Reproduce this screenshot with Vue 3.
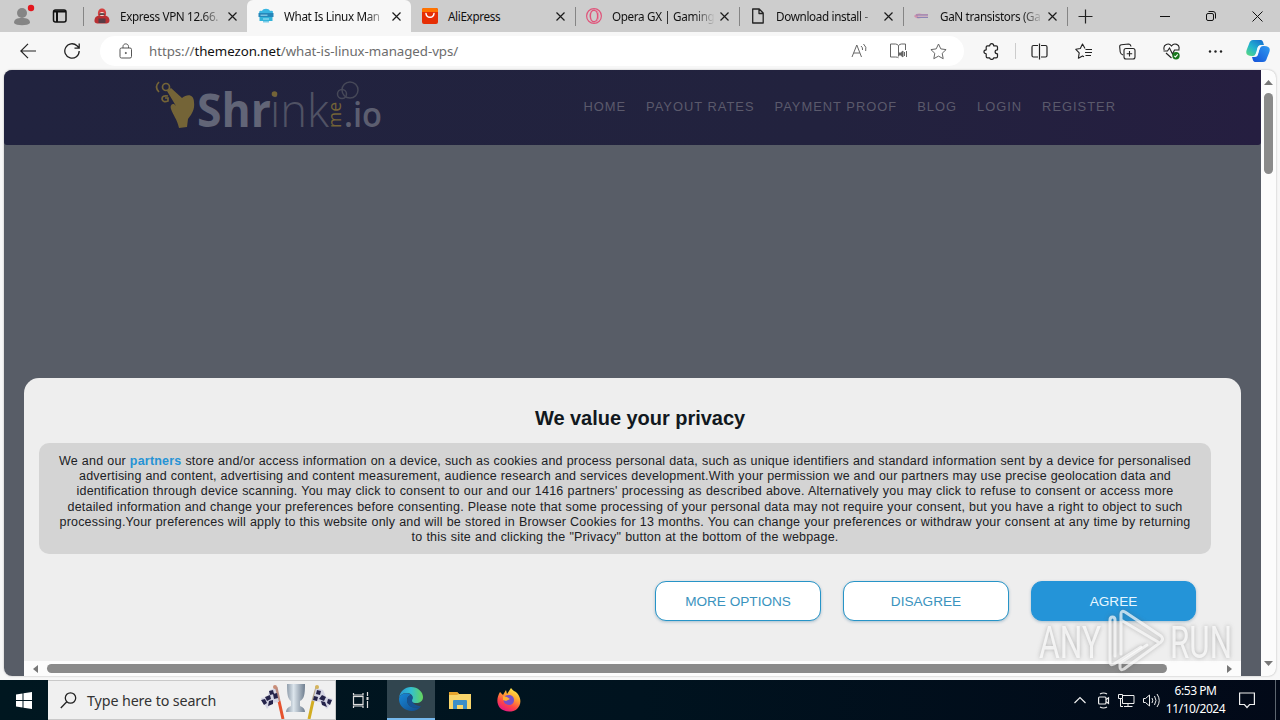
<template>
  <div class="screen">
    <header class="tabbar">
      <div class="tab-tools">
        <svg class="profile" width="22" height="24" viewBox="0 0 22 24">
          <circle cx="9" cy="9" r="5" fill="#858585" />
          <path d="M1 19c0-4 3-5 8-5s8 1 8 5c-2 3-14 3-16 0z" fill="#858585" />
          <circle cx="18" cy="4" r="3.2" fill="#e3171e" />
        </svg>
        <svg width="16" height="16" viewBox="0 0 16 16" fill="none" stroke="#111" stroke-width="1.5">
          <rect x="1.5" y="2" width="12.5" height="12" rx="2" />
          <path d="M2 3.6h12M5 4v10" stroke-width="2" />
        </svg>
      </div>
      <div v-for="tab in tabs" :key="tab.title" class="tab" :class="{ active: tab.active, after: tab.after }">
        <svg class="favicon" width="16" height="16" viewBox="0 0 16 16">
          <g v-if="tab.icon === 'agent'">
            <path d="M4 7C3.500 3 5 .5 8 .5s4.500 2.500 4 6.500l-2 3H6z" fill="#d3403f" />
            <path d="M.5 12C1 8 4 7.500 8 7.500s7 .5 7.500 4.500c0 4-3 3.500-7.500 3.500S0 16 .5 12z" fill="#b92f32" />
            <path d="M5.600 5.500C6 3.500 10 3.500 10.400 5.500L9.500 8h-3z" fill="#f4d6ce" />
            <path d="M5.400 5.300h5.200v1.500H5.400z" fill="#33272b" />
            <rect x="4.500" y="10.500" width="7" height="4.500" fill="#593c45" />
          </g>
          <g v-else-if="tab.icon === 'cloud'">
            <path d="M2 6c-2-2 0-4 2-3 1-3 7-3 8 0 3-1 4 1 2 3z" fill="#38b6e2" />
            <path d="M.5 5h15v4H.5z" fill="#2587ba" />
            <path d="M1.500 9h13v4h-13z" fill="#32b3d9" />
            <path d="M2.500 7.200h7M5 11h6" stroke="#c5f4ff" stroke-width=".8" />
            <path d="M5 13h6v1.500H5z" fill="#79cbe8" />
          </g>
          <g v-else-if="tab.icon === 'ali'">
            <rect width="16" height="16" rx="2" fill="#e62e04" />
            <path d="M0 4V2q0-2 2-2h12q2 0 2 2v2z" fill="#ff7300" />
            <path d="M4 5.500c.5 5 7.500 5 8 0" fill="none" stroke="#fff" stroke-width="1.500" stroke-linecap="round" />
          </g>
          <g v-else-if="tab.icon === 'opera'" fill="none" stroke="#df557b">
            <circle cx="8" cy="8" r="7.400" stroke-width="1.200" />
            <ellipse cx="8" cy="8" rx="3.700" ry="5.800" stroke-width="1.500" />
            <path d="M9 1.600c5 1.500 5 11 0 12.800" stroke="#e88da8" />
          </g>
          <path v-else-if="tab.icon === 'page'" d="M2.700 1h6.500l4 4v10H2.700zM9 1v4.500h4.500" fill="none" stroke="#222" stroke-width="1.300" stroke-linejoin="round" />
          <g v-else>
            <path d="M0 8c2-3 6-3 8-2h6v1.500H4v1h10V10H7c-3 1-6 0-7-2z" fill="#cf91ad" />
            <path d="M2 7h12M3 9.500h11" stroke="#8b86b5" />
          </g>
        </svg>
        <span class="tab-title" :class="{ fade: tab.fade }">{{ tab.title }}</span>
        <svg class="close" width="9" height="9" viewBox="0 0 9 9" stroke="#1b1b1b" stroke-width="1.200">
          <path d="M.5.5l8 8M8.500.5l-8 8" />
        </svg>
      </div>
      <div class="new-tab">
        <svg width="15" height="15" viewBox="0 0 15 15" stroke="#222" stroke-width="1.200"><path d="M7.500.5v14M.5 7.500h14" /></svg>
      </div>
      <div class="window-buttons">
        <svg width="10" height="10" viewBox="0 0 10 10" stroke="#111"><path d="M0 5.500h10" /></svg>
        <svg width="10" height="10" viewBox="0 0 10 10" fill="none" stroke="#111">
          <rect x=".5" y="2.500" width="7" height="7" rx="1.500" />
          <path d="M2.500.5H7q2.500 0 2.500 2.500v4.500" />
        </svg>
        <svg width="11" height="11" viewBox="0 0 11 11" stroke="#111"><path d="M.5.5l10 10M10.500.5l-10 10" /></svg>
      </div>
    </header>

    <div class="toolbar">
      <svg class="back" width="16" height="16" viewBox="0 0 16 16" fill="none" stroke="#222" stroke-width="1.200"><path d="M16 8H.8M8 .8L.8 8 8 15.200" /></svg>
      <svg class="reload" width="16" height="16" viewBox="0 0 16 16" fill="none" stroke="#222" stroke-width="1.300"><path d="M15.200 8A7.200 7.200 0 1 1 13 2.800l2 2M15.200.5v4.600h-4.700" /></svg>
      <div class="address">
        <svg width="14" height="16" viewBox="0 0 14 16" fill="none" stroke="#555">
          <rect x="1" y="5" width="11.500" height="10" rx="1.500" />
          <path d="M4 5V3.500c0-3.500 5.500-3.500 5.500 0V5" />
          <circle cx="6.800" cy="10" r=".6" fill="#555" />
        </svg>
        <span class="url">https://<b>themezon.net</b>/what-is-linux-managed-vps/</span>
        <div class="address-icons">
          <svg width="17" height="16" viewBox="0 0 17 16" fill="none" stroke="#666"><path d="M1 14L5.800 2 10.500 14M2.800 10h6M10 3q2 1.500 1.500 4M12.500 1q3.500 3 2.200 7" /></svg>
          <svg width="18" height="16" viewBox="0 0 18 16" fill="none" stroke="#666">
            <path d="M8.500 2.500v11M8.500 2.500Q7 1 5.500 1h-5v13h5q2 0 3 .8M8.500 2.500Q10 1 11.500 1h4v6" />
            <path d="M9 10h1.500L13 8v6l-2.500-2H9z" fill="#666" />
            <path d="M14.500 9v4M16.500 8v6" />
          </svg>
          <svg width="17" height="17" viewBox="0 0 17 17" fill="none" stroke="#666" stroke-linejoin="round"><path d="M8.500 1l2.300 4.900 5.300.7-3.900 3.700 1 5.400-4.700-2.600-4.700 2.600 1-5.400L.9 6.600l5.300-.7z" /></svg>
        </div>
      </div>
      <div class="actions">
        <svg width="17" height="17" viewBox="0 0 17 17" fill="none" stroke="#222" stroke-width="1.200" stroke-linejoin="round"><path d="M4.500 2.800h2.200c0-2.800 4-2.800 4 0h2.500q1.300 0 1.300 1.300v2.700c-3.200 0-3.200 4 0 4v2.700q0 1.300-1.300 1.300h-2.500c0 2.200-4 2.200-4 0H4.500q-1.300 0-1.300-1.300v-2.700c-3-.2-3-3.800 0-4V4.100q0-1.300 1.300-1.300z" /></svg>
        <i></i>
        <svg width="17" height="17" viewBox="0 0 17 17" fill="none" stroke="#222" stroke-width="1.200"><path d="M7 2.500H2.500Q1 2.500 1 4v8.500Q1 14 2.500 14H7M10 2.500h4.500Q16 2.500 16 4v8.500q0 1.500-1.500 1.500H10M8.500.5v16" /></svg>
        <svg width="17" height="17" viewBox="0 0 17 17" fill="none" stroke="#222" stroke-width="1.100" stroke-linejoin="round"><path d="M10 5.500L7.500 1 5.300 5.500.8 6.300l3.400 3.500-.8 5.400 4.100-2.300 1.500.8M10.500 6.500H17M10 9.500h7M10.500 12.500H16" /></svg>
        <svg width="17" height="17" viewBox="0 0 17 17" fill="none" stroke="#222" stroke-width="1.100">
          <rect x="5" y="5.500" width="11" height="10.500" rx="2" />
          <path d="M4 12Q1.500 11 1.200 9L.7 4Q.5 2 2.500 1.800L9.500 1q2 0 2.500 2.500M10.500 8v5.500M7.700 10.700h5.500" />
        </svg>
        <svg width="17" height="17" viewBox="0 0 17 17" fill="none" stroke="#222" stroke-width="1.100">
          <path d="M1.200 7C-.5 1 6-.5 8.500 3 11-.5 17.500 1 15.800 6.500M3 10l5.500 5M.5 8h4l2-3 3 6 2-4h5" />
          <circle cx="13" cy="12.800" r="3.700" fill="#18771d" stroke="none" />
          <path d="M11.300 12.800l1.200 1.200 2.200-2.700" stroke="#fff" />
        </svg>
        <svg width="17" height="17" viewBox="0 0 17 17" fill="#222"><circle cx="3" cy="8.500" r="1.200" /><circle cx="8.500" cy="8.500" r="1.200" /><circle cx="14" cy="8.500" r="1.200" /></svg>
      </div>
      <svg class="copilot" width="24" height="23" viewBox="0 0 24 23">
        <defs>
          <linearGradient id="cpa" x1="0" y1="1" x2=".8" y2="0"><stop stop-color="#5ddc78" /><stop offset=".5" stop-color="#22b4cf" /><stop offset="1" stop-color="#1673cf" /></linearGradient>
          <linearGradient id="cpb" x1="0" y1="1" x2="1" y2="0"><stop stop-color="#1450d8" /><stop offset="1" stop-color="#2e9bf0" /></linearGradient>
        </defs>
        <path d="M7 0h7c3 0 3 2 4 5h-3c-3 0-3 3-4 6-1 4-2 5-5 5-5 0-7-2-5-7l2-5C4 1 5 0 7 0z" fill="url(#cpa)" />
        <path d="M17 22h-7c-3 0-3-2-4-5h3c3 0 3-3 4-6 1-4 2-5 5-5 5 0 7 2 5 7l-2 5c-1 3-2 4-4 4z" fill="url(#cpb)" />
        <path d="M11.500 7.500q.8-2 3-2h.8q-1.300 1.500-2.200 4.500l-1.300 4q-.7 2-2.800 2h-.5q1.300-2 2-4.500z" fill="#f4faff" />
      </svg>
    </div>

    <main class="viewport">
      <div class="page">
        <div class="site-header">
          <svg class="logo" width="230" height="64" viewBox="0 0 230 64">
            <g fill="#746437">
              <path d="M17 8l11 10c6-5 12-3 12 4 1 7-2 12-6 17l-1 8-8 1c-2-9-6-13-8-19-1-3 0-5 3-5l2 2-9-15z" />
            </g>
            <g fill="none" stroke="#746437" stroke-width="1.700">
              <circle cx="12" cy="7" r="3.500" />
              <path d="M5 2Q0 7 5 12M14 16q-6-1-6 3 1 4 6 2v-3h-3" />
            </g>
            <text x="43" y="47" textLength="74" lengthAdjust="spacingAndGlyphs" class="logo-bold">Shr</text>
            <text x="116" y="47" textLength="59" lengthAdjust="spacingAndGlyphs" class="logo-light">ink</text>
            <circle cx="120.500" cy="14" r="2.800" fill="#746437" />
            <text transform="translate(187 48) rotate(-90)" textLength="26" lengthAdjust="spacingAndGlyphs" class="logo-me">me</text>
            <text x="190" y="47" textLength="38" lengthAdjust="spacingAndGlyphs" class="logo-io">.io</text>
            <g fill="none" stroke="#464858" stroke-width="1.500"><circle cx="196" cy="10" r="8" /><circle cx="188" cy="14" r="4.500" /></g>
          </svg>
          <nav>
            <a v-for="link in links" :key="link">{{ link }}</a>
          </nav>
        </div>
        <section class="consent">
          <h2>We value your privacy</h2>
          <div class="notice">
            <div v-for="(line, i) in lines" :key="i" class="line" :style="{ width: line.width + 'px' }">
              <template v-if="i === 0">We and our <b>partners</b>{{ ' ' }}</template>{{ line.text }}
            </div>
          </div>
          <div class="buttons">
            <button>MORE OPTIONS</button>
            <button>DISAGREE</button>
            <button class="primary">AGREE</button>
          </div>
          <div class="hscroll">
            <svg width="5" height="8" viewBox="0 0 5 8"><path d="M5 0v8L0 4z" fill="#777" /></svg>
            <div class="hthumb"></div>
            <svg width="5" height="8" viewBox="0 0 5 8"><path d="M0 0v8l5-4z" fill="#777" /></svg>
          </div>
        </section>
      </div>
      <div class="vscroll">
        <svg width="9" height="5" viewBox="0 0 9 5"><path d="M0 5h9L4.500 0z" fill="#777" /></svg>
        <div class="vthumb"></div>
        <svg class="down" width="9" height="5" viewBox="0 0 9 5"><path d="M0 0h9L4.500 5z" fill="#777" /></svg>
      </div>
    </main>

    <footer class="taskbar">
      <div class="start">
        <svg width="16" height="17" viewBox="0 0 16 17" fill="#fff"><path d="M0 2.500L6.500 1.500V8H0zM7.500 1.300L16 0v8H7.500zM0 9h6.500v6.500L0 14.500zM7.500 9H16v8l-8.500-1.300z" /></svg>
      </div>
      <div class="search">
        <svg width="17" height="17" viewBox="0 0 17 17" fill="none" stroke="#222" stroke-width="1.300"><circle cx="10.500" cy="6" r="5.200" /><path d="M6.800 9.800L.8 16" /></svg>
        <span>Type here to search</span>
        <svg class="race" width="75" height="38" viewBox="0 0 75 38">
          <defs><linearGradient id="cup"><stop stop-color="#8593a2" /><stop offset=".4" stop-color="#dce5ec" /><stop offset="1" stop-color="#6f7e8f" /></linearGradient></defs>
          <path d="M27 3h18c0 11-1 15-5 17v5c3 1 5 3 5 6H26c0-3 2-5 5-6v-5c-3-2-4-6-4-17z" fill="url(#cup)" />
          <path d="M16 6l3 14" stroke="#b98a80" stroke-width="3" />
          <path d="M19 20l4 18" stroke="#e6522d" stroke-width="3" />
          <path d="M57 6l-4 14" stroke="#b5a588" stroke-width="3" />
          <path d="M53 20l-4 18" stroke="#d2ad22" stroke-width="3" />
          <path d="M15 7l4 14-7 1-5 6-6-11 6-1 3-7z" fill="#d5d5e4" />
          <path d="M9 10l4-1 1 4-4 1zM5 16l5-2 1 4-4 2zM13 13l4-1 1 5-4 1zM9 20l4-1v4l-5 2zM1 19l4-1 2 4-3 2z" fill="#25234a" />
          <path d="M56 7l-3 13 7 1 7 7 6-10-7-2-3-7z" fill="#d5d5e4" />
          <path d="M57 9l4 1-1 4-4-1zM62 14l4 2-2 4-5-2zM54 15l4 1-1 4-4-1zM61 20l4 1 2 5-5-2zM68 18l4 1-2 5-3-2z" fill="#25234a" />
          <circle cx="15" cy="6" r="2" fill="#c98d76" />
          <circle cx="57" cy="6" r="2" fill="#d5b45c" />
        </svg>
      </div>
      <div class="task">
        <svg width="18" height="17" viewBox="0 0 18 17" fill="none" stroke="#ddd" stroke-width="1.200"><rect x="1.500" y="4.500" width="9.500" height="8" /><path d="M1.500 1v2H11V1M1.500 16v-2H11v2M15.500 0v4M15.500 9v7" /><path d="M14.500 5h2v3h-2z" fill="#ddd" stroke="none" /></svg>
      </div>
      <div class="task current">
        <svg width="24" height="24" viewBox="0 0 24 24">
          <defs>
            <linearGradient id="edgea"><stop stop-color="#2796d4" /><stop offset=".5" stop-color="#33bfd1" /><stop offset="1" stop-color="#65d65b" /></linearGradient>
            <linearGradient id="edgeb" x1="0" y1="0" x2="1" y2="1"><stop stop-color="#1789d9" /><stop offset="1" stop-color="#124989" /></linearGradient>
          </defs>
          <path d="M0 11C1 4 6 0 12 0c7 0 12 5 12 10 0 4-3 6-7 6-3 0-5-1-4-3 2-4-1-7-5-7-4 0-7 2-8 5z" fill="url(#edgea)" />
          <path d="M0 12c0-5 8-8 12-4-4 1-5 5-3 9 3 5 10 4 13 2-3 5-9 6-14 4-5-2-8-6-8-11z" fill="url(#edgeb)" />
          <path d="M12 8c-4 1-5 5-3 9 3 5 10 4 13 2-4 0-9-2-9-6 1-2 1-4-1-5z" fill="#155293" />
        </svg>
      </div>
      <div class="task">
        <svg width="22" height="19" viewBox="0 0 22 19"><path d="M0 1h8l2 2h12v15H0z" fill="#f8d56b" /><path d="M0 1h8l2 2-2 1H0z" fill="#e6a42c" /><path d="M4 10q0-1 1-1h12q1 0 1 1v8h-4v-4H8v4H4z" fill="#3c8ec8" /></svg>
      </div>
      <div class="task">
        <svg width="24" height="24" viewBox="0 0 24 24">
          <defs><linearGradient id="fox" x1=".8" y1="0" x2=".3" y2="1"><stop stop-color="#fff34f" /><stop offset=".35" stop-color="#ffab31" /><stop offset=".7" stop-color="#ff4546" /><stop offset="1" stop-color="#e51486" /></linearGradient></defs>
          <path d="M3 4l3 3 3-5 1 4 4-6c2 3 4 3 6 5 5 6 4 12 0 16-5 4-13 3-17-1C-1 15 0 9 3 4z" fill="url(#fox)" />
          <path d="M8 8c4-2 9-1 9 4s-5 6-8 4c-2-1-3-3-2-4h5L8 10z" fill="#7650ca" />
          <path d="M6 8l4 1 3 2-4 2-3-1z" fill="#ffad32" />
        </svg>
      </div>
      <div class="tray">
        <svg class="chevron" width="12" height="8" viewBox="0 0 12 8" fill="none" stroke="#eee" stroke-width="1.200"><path d="M.5 7L6 1.500 11.500 7" /></svg>
        <svg width="12" height="17" viewBox="0 0 12 17" fill="none" stroke="#eee" stroke-width="1.200"><rect x=".6" y="5" width="7.400" height="7" rx="1" /><path d="M8 7.500l2.500-1.700v5.500L8 9.700M2 2q3.500-2 7 0M2 15q3.500 2 7 0" /></svg>
        <svg width="17" height="15" viewBox="0 0 17 15" fill="none" stroke="#eee"><path d="M5 2.500h11v8H4.500V6M10 10.500v3M6 13.500h8.500M.5 1.500h4v4h-4zM2.500 5.500v8H5" /></svg>
        <svg width="17" height="15" viewBox="0 0 17 15" fill="none" stroke="#eee"><path d="M.5 5.500h2L6.500 2v11L2.500 9.500h-2zM9 5q1.500 2.500 0 5M11.500 3q3 4.500 0 9M14 1q4.500 6.500 0 13" /></svg>
      </div>
      <div class="clock"><span>6:53 PM</span><span>11/10/2024</span></div>
      <svg class="bell" width="16" height="17" viewBox="0 0 16 17" fill="none" stroke="#eee" stroke-width="1.200"><path d="M.6 1h14.800v11.500h-4.800L8 15.500l-2.600-3H.6z" /></svg>
      <i class="peek"></i>
    </footer>

    <svg class="watermark" width="204" height="68" viewBox="0 0 204 68">
      <g class="mark-text">
        <text x="5" y="51" textLength="62" lengthAdjust="spacingAndGlyphs">ANY</text>
        <text x="136" y="51" textLength="62" lengthAdjust="spacingAndGlyphs">RUN</text>
      </g>
      <g class="mark-shape" fill="none" stroke-linejoin="round" stroke-linecap="round">
        <path d="M81 49V13q0-3-2.500-3T76 13v42q0 4 4 2l27-17" />
        <path d="M87 47V7q0-4 4-2l36 24q3 3 0 6L90 62q-4 2-4-2v-4l27-18M87 13l37 22" />
      </g>
    </svg>
  </div>
</template>

<script setup>
const tabs = [
  { title: 'Express VPN 12.66.', icon: 'agent', fade: true },
  { title: 'What Is Linux Man', icon: 'cloud', active: true, fade: true },
  { title: 'AliExpress', icon: 'ali', after: true },
  { title: 'Opera GX | Gaming', icon: 'opera', fade: true },
  { title: 'Download install -', icon: 'page', fade: true },
  { title: 'GaN transistors (Ga', icon: 'gan', fade: true }
]

const links = ['HOME', 'PAYOUT RATES', 'PAYMENT PROOF', 'BLOG', 'LOGIN', 'REGISTER']

const lines = [
  { width: 1132, text: 'store and/or access information on a device, such as cookies and process personal data, such as unique identifiers and standard information sent by a device for personalised' },
  { width: 1092, text: 'advertising and content, advertising and content measurement, audience research and services development.With your permission we and our partners may use precise geolocation data and' },
  { width: 1097, text: 'identification through device scanning. You may click to consent to our and our 1416 partners\' processing as described above. Alternatively you may click to refuse to consent or access more' },
  { width: 1115, text: 'detailed information and change your preferences before consenting. Please note that some processing of your personal data may not require your consent, but you have a right to object to such' },
  { width: 1131, text: 'processing.Your preferences will apply to this website only and will be stored in Browser Cookies for 13 months. You can change your preferences or withdraw your consent at any time by returning' },
  { width: 427, text: 'to this site and clicking the "Privacy" button at the bottom of the webpage.' }
]
</script>

<style>
body {
  overflow: hidden;
}
</style>

<style scoped>
.screen {
  position: relative;
  width: 1280px;
  height: 720px;
  display: flex;
  flex-direction: column;
  background: #f7f7f7;
  font-family: "Noto Sans", "Open Sans", sans-serif;
  font-size: 12px;
  overflow: hidden;
}

.screen * {
  box-sizing: border-box;
}

svg {
  display: block;
  flex: none;
}

/* tabs */
.tabbar {
  height: 32px;
  flex: none;
  display: flex;
  background: #cdcdcd;
}

.tab-tools {
  width: 83px;
  display: flex;
  align-items: center;
  gap: 17px;
  padding-left: 13px;
}

.tab {
  width: 164px;
  display: flex;
  align-items: center;
  padding-left: 11px;
  position: relative;
}

.tab::before,
.new-tab::before {
  content: '';
  position: absolute;
  left: 0;
  top: 7px;
  height: 19px;
  width: 1px;
  background: #858585;
}

.tab.active {
  background: #f7f7f7;
  border-radius: 6px 6px 0 0;
}

.tab.active::before,
.tab.after::before {
  display: none;
}

.tab-title {
  width: 102px;
  margin-left: 10px;
  white-space: nowrap;
  color: #111;
  font-size: 11.7px;
  letter-spacing: -0.35px;
  line-height: 18px;
}

.tab-title.fade {
  mask-image: linear-gradient(to right, #000 80%, transparent 101%);
}

.close {
  margin-left: 6px;
}

.new-tab {
  position: relative;
  width: 40px;
  display: flex;
  align-items: center;
  padding-left: 11px;
}

.window-buttons {
  flex: 1;
  display: flex;
  align-items: center;
  justify-content: flex-end;
  gap: 36px;
  padding-right: 17px;
}

/* toolbar */
.toolbar {
  height: 38px;
  flex: none;
  display: flex;
  align-items: center;
  padding-left: 20px;
}

.reload {
  margin-left: 28px;
}

.address {
  width: 864px;
  height: 30px;
  margin-left: 20px;
  border-radius: 15px;
  background: #fff;
  display: flex;
  align-items: center;
  padding: 0 17px 0 19px;
}

.url {
  margin-left: 16px;
  font-size: 13.3px;
  letter-spacing: -0.05px;
  color: #6c6c6c;
}

.url b {
  color: #111;
  font-weight: 400;
}

.address-icons {
  display: flex;
  align-items: center;
  gap: 22px;
  margin-left: auto;
}

.actions {
  display: flex;
  align-items: center;
  gap: 27px;
  margin-left: 19px;
}

.actions i {
  width: 1px;
  height: 16px;
  background: #ccc;
  margin: 0 -12px 0 -12px;
}

.copilot {
  margin-left: 22px;
}

/* page */
.viewport {
  width: 1272px;
  height: 606px;
  flex: none;
  margin-left: 4px;
  display: flex;
  border-radius: 8px;
  overflow: hidden;
  background: #fcfcfc;
  box-shadow: 0 0 2px #aaa;
}

.page {
  width: 1257px;
  background: #585d67;
  display: flex;
  flex-direction: column;
}

.site-header {
  height: 75px;
  display: flex;
  padding: 10px 145px 0 150px;
  justify-content: space-between;
  background: linear-gradient(to right, #21233f, #22223e 65%, #251e40);
  border-radius: 0 0 3px 3px;
}

.logo-bold {
  font: 700 46px "Open Sans", sans-serif;
  fill: #626577;
}

.logo-light {
  font: 300 46px "Open Sans", sans-serif;
  fill: #505264;
}

.logo-me {
  font: 400 19px "Open Sans", sans-serif;
  fill: #746437;
}

.logo-io {
  font: 600 34px "Open Sans", sans-serif;
  fill: #5c5e70;
}

nav {
  display: flex;
  gap: 20px;
  padding-top: 17px;
}

nav a {
  font: 12.9px/20px "Liberation Sans", Arial, sans-serif;
  letter-spacing: 1px;
  color: #5b5a6c;
  white-space: nowrap;
}

/* consent dialog */
.consent {
  width: 1217px;
  height: 298px;
  margin: 233px 0 0 20px;
  border-radius: 15px 15px 0 0;
  background: #eee;
  font-family: "Liberation Sans", Arial, sans-serif;
  display: flex;
  flex-direction: column;
}

h2 {
  margin: 28px 0 0 15px;
  font-size: 20px;
  line-height: 24px;
  font-weight: 700;
  letter-spacing: -0.03px;
  text-align: center;
  color: #111820;
}

.notice {
  width: 1172px;
  height: 111px;
  margin: 13px 0 0 15px;
  padding-top: 11px;
  border-radius: 10px;
  background: #d4d4d4;
  color: #202124;
}

.line {
  margin: 0 auto;
  font-size: 12.5px;
  line-height: 15.2px;
  letter-spacing: 0.2px;
  white-space: nowrap;
  text-align: justify;
  text-align-last: justify;
}

.line b {
  color: #2693d5;
}

.buttons {
  display: flex;
  justify-content: flex-end;
  gap: 22px;
  margin: 27px 45px 0 0;
}

button {
  width: 166px;
  height: 40px;
  border: 1px solid #2794c7;
  border-radius: 11px;
  background: #fff;
  color: #3a93be;
  font: 13.6px "Liberation Sans", Arial, sans-serif;
  box-shadow: 0 1px 3px rgba(0, 80, 130, 0.3);
}

button.primary {
  width: 165px;
  background: #2494d8;
  border-color: #2494d8;
  color: #e8f7ff;
}

.hscroll {
  height: 15px;
  margin-top: auto;
  display: flex;
  align-items: center;
  padding: 0 9px;
  background: #fcfcfc;
}

.hthumb {
  width: 1120px;
  height: 9px;
  margin: 0 auto 0 9px;
  border-radius: 5px;
  background: #8a8a8a;
}

.vscroll {
  width: 15px;
  display: flex;
  flex-direction: column;
  align-items: center;
  padding: 10px 0;
}

.vthumb {
  width: 9px;
  height: 81px;
  margin-top: 8px;
  border-radius: 5px;
  background: #8a8a8a;
}

.down {
  margin-top: auto;
}

/* taskbar */
.taskbar {
  height: 40px;
  margin-top: auto;
  display: flex;
  align-items: center;
  background: linear-gradient(to right, #001720, #00131f 50%, #020918);
  color: #fff;
}

.start {
  width: 48px;
  display: flex;
  justify-content: center;
}

.search {
  width: 288px;
  height: 40px;
  display: flex;
  align-items: center;
  padding-left: 12px;
  background: #f0f0f0;
  border: 1px solid #c9c9c9;
  border-left: 0;
  color: #333;
  font-size: 14.3px;
  letter-spacing: -0.12px;
  white-space: nowrap;
}

.search span {
  margin-left: 10px;
}

.race {
  margin-left: auto;
}

.task {
  width: 49px;
  height: 40px;
  display: flex;
  align-items: center;
  justify-content: center;
}

.task.current {
  width: 48px;
  margin-left: 2px;
  background: #31454f;
  border-bottom: 2px solid #76b9ed;
}

.tray {
  display: flex;
  align-items: center;
  gap: 8px;
  margin-left: auto;
}

.chevron {
  margin-right: 4px;
}

.clock {
  width: 71px;
  display: flex;
  flex-direction: column;
  align-items: center;
  margin-right: 8px;
  line-height: 18px;
  letter-spacing: -0.45px;
}

.bell {
  margin-right: 20px;
}

.peek {
  width: 1px;
  height: 40px;
  margin-right: 4px;
  background: #5d6670;
}

/* recorder logo floating above the desktop */
.watermark {
  position: absolute;
  left: 1034px;
  top: 607px;
  filter: drop-shadow(0 0 2px rgba(80, 80, 80, 0.5));
}

.mark-text {
  font: 400 44px Roboto, sans-serif;
  fill: #fff;
  fill-opacity: 0.75;
}

.mark-shape {
  stroke: #fff;
  stroke-opacity: 0.7;
  stroke-width: 3px;
}
</style>
